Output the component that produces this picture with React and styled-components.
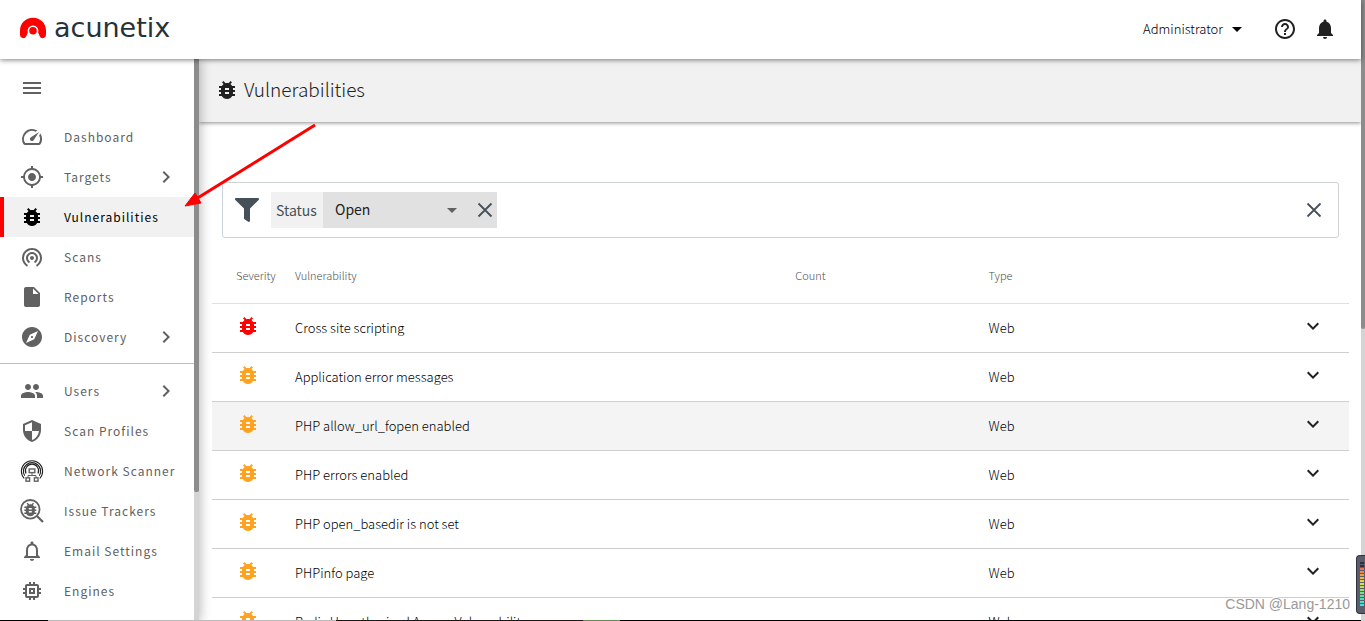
import React from "react";
import styled, { createGlobalStyle } from "styled-components";
import {
  MdArrowDropDown,
  MdBugReport,
  MdChevronRight,
  MdExpandMore,
  MdExplore,
  MdGpsFixed,
  MdHelpOutline,
  MdInsertDriveFile,
  MdMemory,
  MdMenu,
  MdNotifications,
  MdNotificationsNone,
  MdPeople,
  MdSecurity,
  MdSpeed,
  MdWifiTethering,
} from "react-icons/md";
import { FaFilter } from "react-icons/fa";

const COLORS = {
  text: "#212121",
  light: "#000",
  nav: "#616161",
  muted: "#505050",
  brand: "#ff0000",
  medium: "#ffa21f",
  line: "#cfcfcf",
  bar: "#f1f1f1",
  slate: "#455059",
  thumb: "#8c8c8c",
  track: "#d4d4d4",
};

const GlobalStyle = createGlobalStyle`
  * {
    box-sizing: border-box;
  }

  body {
    margin: 0;
    color: ${COLORS.text};
    background-color: #fff;
    font-family: "Noto Sans CJK SC", "Open Sans", sans-serif;
    font-size: 13px;
    line-height: 20px;
  }

  button, select {
    font: inherit;
    color: inherit;
    border: 0;
    padding: 0;
    background: none;
  }

  svg {
    display: block;
    flex: none;
  }
`;

const Screen = styled.div`
  position: relative;
  display: flex;
  height: 100vh;
  overflow: hidden;
`;

const Page = styled.div`
  flex: 1;
  min-width: 0;
  display: flex;
  flex-direction: column;
`;

const Track = styled.div`
  flex: none;
  width: ${({ $width }) => $width}px;
  background-color: ${COLORS.track};
`;

const Thumb = styled.div`
  height: ${({ $size }) => $size};
  background-color: ${COLORS.thumb};
  border-radius: 0 0 2px 2px;
`;

const Header = styled.header`
  position: relative;
  z-index: 3;
  flex: none;
  display: flex;
  align-items: center;
  height: 59px;
  padding: 0 24px 2px 20px;
  background-color: #fff;
  box-shadow: 0 1px 5px rgba(0, 0, 0, 0.5);
`;

const Brand = styled.a`
  display: flex;
  align-items: center;
  gap: 8px;
  margin-right: auto;
  padding-bottom: 2px;
  color: #263238;
  font-family: "DejaVu Sans", sans-serif;
  font-size: 27px;
  line-height: 32px;
  text-decoration: none;
`;

const UserButton = styled.button`
  display: flex;
  align-items: center;
  gap: 2px;
  margin-right: 24px;
  color: ${COLORS.light};
  font-weight: 300;
`;

const IconButton = styled.button`
  display: flex;
  color: inherit;
`;

const Tools = styled.div`
  display: flex;
  gap: 16px;
`;

const Body = styled.div`
  flex: 1;
  min-height: 0;
  display: flex;
`;

const Sidebar = styled.aside`
  position: relative;
  z-index: 2;
  flex: none;
  display: flex;
  width: 199px;
  background-color: #fff;
  box-shadow: 2px 0 10px rgba(0, 0, 0, 0.25);
`;

const Nav = styled.nav`
  flex: 1;
  overflow: hidden;
  color: ${COLORS.nav};
`;

const MenuToggle = styled.button`
  display: flex;
  padding: 17px 20px;
`;

const NavGroup = styled.div`
  & + & {
    margin-top: 6px;
    padding-top: 7px;
    border-top: 1px solid #bdbdbd;
  }
`;

const NavItem = styled.a`
  display: flex;
  align-items: center;
  gap: 20px;
  height: 40px;
  padding-right: 16px;
  padding-left: 16px;
  border-left: 4px solid ${({ $active }) => ($active ? COLORS.brand : "transparent")};
  background-color: ${({ $active }) => ($active ? COLORS.bar : "transparent")};
  color: ${({ $active }) => ($active ? "#000" : "inherit")};
  letter-spacing: 1px;
  white-space: nowrap;
  text-decoration: none;
`;

const NavLabel = styled.span`
  flex: 1;
  font-size: 12px;
`;

const Main = styled.main`
  flex: 1;
  min-width: 0;
  overflow: hidden;
`;

const TitleBar = styled.div`
  display: flex;
  align-items: center;
  gap: 5px;
  height: 63px;
  padding: 0 0 2px 16px;
  background-color: ${COLORS.bar};
  box-shadow: 0 1px 4px rgba(0, 0, 0, 0.45);
`;

const Title = styled.h1`
  margin: 0;
  padding-bottom: 2px;
  font-size: 19px;
  font-weight: 300;
  line-height: 28px;
`;

const Content = styled.div`
  padding: 60px 12px 0 13px;
`;

const FilterBar = styled.div`
  display: flex;
  align-items: center;
  height: 56px;
  margin: 0 10px 11px;
  padding: 0 12px;
  border: 1px solid #ccd2d8;
  border-radius: 3px;
  color: ${COLORS.slate};
`;

const Chip = styled.div`
  display: flex;
  align-items: center;
  height: 36px;
  margin-right: auto;
  margin-left: 12px;
  background-color: #e1e1e1;
`;

const ChipLabel = styled.label`
  align-self: stretch;
  min-width: 52px;
  padding: 0 5px;
  background-color: #f1f1f1;
  font-size: 14px;
  line-height: 36px;
`;

const SelectWrap = styled.div`
  display: flex;
  align-items: center;
  margin-right: 9px;
  color: ${COLORS.nav};
`;

const Select = styled.select`
  appearance: none;
  width: 141px;
  height: 36px;
  margin-right: -24px;
  padding: 0 24px 2px 12px;
  color: ${COLORS.text};
  font-size: 14px;
`;

const Table = styled.table`
  width: 100%;
  table-layout: fixed;
  border-collapse: collapse;
`;

const HeadCell = styled.th`
  width: ${({ $width }) => $width || "auto"};
  height: 54px;
  padding: 0 0 2px ${({ $inset }) => ($inset ? 24 : 0)}px;
  border-bottom: 1px solid #e0e0e0;
  color: ${COLORS.muted};
  font-size: 11px;
  font-weight: 300;
  text-align: left;
`;

const Row = styled.tr`
  background-color: ${({ $hover }) => ($hover ? "#f4f4f4" : "#fff")};
`;

const Cell = styled.td`
  height: 49px;
  padding: 0;
  border-bottom: 1px solid ${COLORS.line};
  color: ${COLORS.light};
  font-weight: 300;
  white-space: nowrap;
`;

const IconCell = styled(Cell)`
  padding: 0 0 4px ${({ $inset }) => ($inset ? 24 : 0)}px;
  color: ${({ $color }) => $color || COLORS.text};
`;

const Arrow = styled.svg`
  position: absolute;
  z-index: 4;
  top: 120px;
  left: 180px;
`;

const Watermark = styled.div`
  position: absolute;
  z-index: 4;
  right: 15px;
  bottom: 7px;
  color: #999;
  font-family: "Liberation Sans", Arial, sans-serif;
  font-size: 14px;
  text-shadow: 1px 1px 0 #fff, -1px -1px 0 #fff;
`;

const Meter = styled.div`
  position: absolute;
  z-index: 5;
  right: 0;
  bottom: 7px;
  display: flex;
  flex-direction: column;
  gap: 1px;
  width: 9px;
  height: 59px;
  padding: 6px 0 0 3px;
  border: 1px solid #30323c;
  border-right: 0;
  border-radius: 4px 0 0 4px;
  background-color: #5a5d6b;
`;

const MeterBar = styled.i`
  flex: none;
  width: 4px;
  height: 2px;
  background-color: ${({ $color }) => $color};
`;

const Taskbar = styled.div`
  position: absolute;
  z-index: 4;
  right: 4px;
  bottom: 0;
  left: 0;
  height: 1px;
  background: linear-gradient(
    to right,
    #000 48px,
    #bbb 48px 336px,
    #1c1614 336px 583px,
    #5b8c50 583px 620px,
    #000 620px
  );
`;

function LogoMark() {
  return (
    <svg width="26" height="22" viewBox="0 0 26 22" aria-hidden="true">
      <path
        d="M13 .8C5.500 .8 0 6.500 0 13.500v4.300a3.300 3.300 0 0 0 6.300 1.400c.5-1 .7-1.700 1.300-2.700h10.800c.6 1 .8 1.700 1.300 2.700a3.300 3.300 0 0 0 6.300-1.400v-4.300C26 6.500 20.500.8 13 .8z"
        fill={COLORS.brand}
      />
      <circle cx="13" cy="13.800" r="5.400" fill="#fff" />
      <path d="M8 15h10l2 7H6z" fill="#fff" />
      <circle cx="13" cy="13.800" r="3.800" fill={COLORS.brand} />
    </svg>
  );
}

function CloseIcon() {
  return (
    <svg width="24" height="24" viewBox="0 0 24 24" aria-hidden="true">
      <path d="M5.500 5.500l13 13M18.500 5.500l-13 13" stroke="currentColor" strokeWidth="1.800" />
    </svg>
  );
}

function NetworkScannerIcon() {
  return (
    <svg width="24" height="24" viewBox="0 0 24 24" fill="none" stroke="currentColor" aria-hidden="true">
      <g stroke="#222" strokeWidth="1.100">
        <path d="M4.200 19.500A10.600 10.600 0 1 1 19.800 19.500" />
        <path d="M4.700 16.800A8.600 8.600 0 1 1 19.300 16.800" />
        <path d="M6 14.500A6.600 6.600 0 1 1 18 14.500" />
      </g>
      <g strokeWidth="1.400">
        <rect x="9.200" y="10" width="5.600" height="3.600" />
        <path d="M12 14v2.500M8 18.500v-2h8v2" strokeWidth="1" />
        <rect x="6" y="18.800" width="3.600" height="3.400" />
        <rect x="14.400" y="18.800" width="3.600" height="3.400" />
      </g>
    </svg>
  );
}

function IssueTrackersIcon() {
  return (
    <svg width="24" height="24" viewBox="0 0 24 24" aria-hidden="true">
      <circle cx="10.300" cy="10.300" r="9.300" fill="none" stroke="currentColor" strokeWidth="1.800" />
      <path d="M17 17l6 6" stroke="currentColor" strokeWidth="2.200" />
      <g transform="translate(1.300 1.500) scale(.75)">
        <MdBugReport size={24} />
      </g>
    </svg>
  );
}

const groups = [
  [
    { label: "Dashboard", icon: MdSpeed },
    { label: "Targets", icon: MdGpsFixed, nested: true },
    { label: "Vulnerabilities", icon: MdBugReport, active: true },
    { label: "Scans", icon: MdWifiTethering },
    { label: "Reports", icon: MdInsertDriveFile },
    { label: "Discovery", icon: MdExplore, nested: true },
  ],
  [
    { label: "Users", icon: MdPeople, nested: true },
    { label: "Scan Profiles", icon: MdSecurity },
    { label: "Network Scanner", icon: NetworkScannerIcon },
    { label: "Issue Trackers", icon: IssueTrackersIcon },
    { label: "Email Settings", icon: MdNotificationsNone },
    { label: "Engines", icon: MdMemory },
  ],
];

const vulnerabilities = [
  { name: "Cross site scripting", color: COLORS.brand },
  { name: "Application error messages", color: COLORS.medium },
  { name: "PHP allow_url_fopen enabled", color: COLORS.medium, hover: true },
  { name: "PHP errors enabled", color: COLORS.medium },
  { name: "PHP open_basedir is not set", color: COLORS.medium },
  { name: "PHPinfo page", color: COLORS.medium },
  { name: "Redis Unauthorized Access Vulnerability", color: COLORS.medium },
];

const meterColors = [
  "#30323c", "#30323c", "#f0705a", "#f08a4a", "#f0a040", "#f0b83c", "#ecd040", "#d8e04a",
  "#b8e058", "#98e068", "#78e080", "#60e098", "#50e0b0", "#48e0c8", "#48e0d8",
];

function TopBar() {
  return (
    <Header>
      <Brand href="#">
        <LogoMark />
        acunetix
      </Brand>
      <UserButton>
        Administrator
        <MdArrowDropDown size={24} />
      </UserButton>
      <Tools>
        <IconButton aria-label="Help">
          <MdHelpOutline size={24} />
        </IconButton>
        <IconButton aria-label="Notifications">
          <MdNotifications size={24} />
        </IconButton>
      </Tools>
    </Header>
  );
}

function SideMenu() {
  return (
    <Sidebar>
      <Nav>
        <MenuToggle aria-label="Toggle menu">
          <MdMenu size={24} />
        </MenuToggle>
        {groups.map((items, i) => (
          <NavGroup key={i}>
            {items.map(({ label, icon: Icon, active, nested }) => (
              <NavItem key={label} href="#" $active={active}>
                <Icon size={24} />
                <NavLabel>{label}</NavLabel>
                {nested && <MdChevronRight size={24} />}
              </NavItem>
            ))}
          </NavGroup>
        ))}
      </Nav>
      <Track $width={5}>
        <Thumb $size="77%" />
      </Track>
    </Sidebar>
  );
}

function Filters() {
  return (
    <FilterBar>
      <FaFilter size={24} />
      <Chip>
        <ChipLabel htmlFor="status">Status</ChipLabel>
        <SelectWrap>
          <Select id="status" defaultValue="open">
            <option value="open">Open</option>
            <option value="fixed">Fixed</option>
          </Select>
          <MdArrowDropDown size={24} pointerEvents="none" />
        </SelectWrap>
        <IconButton aria-label="Remove status filter">
          <CloseIcon />
        </IconButton>
      </Chip>
      <IconButton aria-label="Clear filters">
        <CloseIcon />
      </IconButton>
    </FilterBar>
  );
}

function VulnerabilityTable() {
  return (
    <Table>
      <thead>
        <tr>
          <HeadCell $width="83px" $inset>Severity</HeadCell>
          <HeadCell $width="44%">Vulnerability</HeadCell>
          <HeadCell $width="17%">Count</HeadCell>
          <HeadCell>Type</HeadCell>
          <HeadCell $width="48px" />
        </tr>
      </thead>
      <tbody>
        {vulnerabilities.map(({ name, color, hover }) => (
          <Row key={name} $hover={hover}>
            <IconCell $inset $color={color}>
              <MdBugReport size={24} />
            </IconCell>
            <Cell>{name}</Cell>
            <Cell />
            <Cell>Web</Cell>
            <IconCell>
              <IconButton aria-label={`Expand ${name}`}>
                <MdExpandMore size={24} />
              </IconButton>
            </IconCell>
          </Row>
        ))}
      </tbody>
    </Table>
  );
}

function App() {
  return (
    <>
      <GlobalStyle />
      <Screen>
        <Page>
          <TopBar />
          <Body>
            <SideMenu />
            <Main>
              <TitleBar>
                <MdBugReport size={24} />
                <Title>Vulnerabilities</Title>
              </TitleBar>
              <Content>
                <Filters />
                <VulnerabilityTable />
              </Content>
            </Main>
          </Body>
        </Page>
        <Track $width={4}>
          <Thumb $size="53%" />
        </Track>
        <Arrow width="140" height="90" viewBox="0 0 140 90" aria-hidden="true">
          <path d="M135 5L16 79" stroke={COLORS.brand} strokeWidth="3" />
          <path d="M5 86l10-13 6 10z" fill={COLORS.brand} stroke={COLORS.brand} />
        </Arrow>
        <Watermark>CSDN @Lang-1210</Watermark>
        <Meter>
          {meterColors.map((color, i) => (
            <MeterBar key={i} $color={color} />
          ))}
        </Meter>
        <Taskbar />
      </Screen>
    </>
  );
}

export default App;
